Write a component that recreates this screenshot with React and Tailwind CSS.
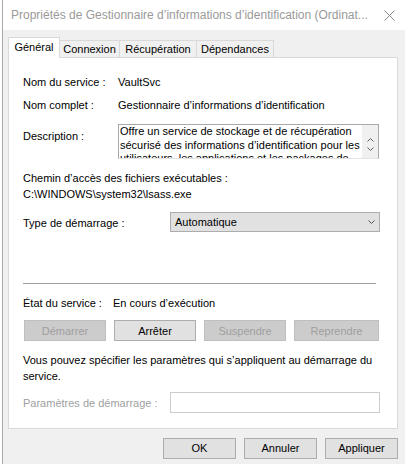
import React from 'react'

function Chevron({ dir = 'down', className = '' }) {
  const d = dir === 'down' ? 'M0.5 0.5 L3.5 3.5 L6.5 0.5' : 'M0.5 3.5 L3.5 0.5 L6.5 3.5'
  return (
    <svg width="7" height="4" viewBox="0 0 7 4" className={className}>
      <path d={d} fill="none" stroke="currentColor" strokeWidth="1" />
    </svg>
  )
}

function Btn({ children, disabled, className = '' }) {
  return (
    <div
      className={`h-[21px] flex items-center justify-center border ${
        disabled ? 'bg-[#cccccc] border-[#bfbfbf] text-[#a0a0a0]' : 'bg-[#e1e1e1] border-[#adadad] text-black'
      } ${className}`}
    >
      {children}
    </div>
  )
}

export default function App() {
  const tabs = [
    { label: 'Connexion', w: 'w-[60px]' },
    { label: 'Récupération', w: 'w-[77px]' },
    { label: 'Dépendances', w: 'w-[77px]' },
  ]

  return (
    <div className="w-[405px] h-[464px] bg-white overflow-hidden font-['Liberation_Sans',Arial,sans-serif] text-[11px] text-black">
      <div className="ml-[2px] h-full border-l border-[#a8a8a8] flex flex-col">
        {/* Title bar */}
        <div className="h-[30px] shrink-0 bg-white flex items-center justify-between pl-[8px] pr-[10px]">
          <div className="text-[12px] text-[#9a9a9a] whitespace-nowrap">
            Propriétés de Gestionnaire d’informations d’identification (Ordinat...
          </div>
          <svg width="11" height="11" viewBox="0 0 11 11" className="text-[#8a8a8a]">
            <path d="M0.5 0.5 L10.5 10.5 M10.5 0.5 L0.5 10.5" stroke="currentColor" strokeWidth="1" />
          </svg>
        </div>

        {/* Body */}
        <div className="flex-1 bg-[#f0f0f0] pl-[5px] pt-[7px]">
          {/* Tabs */}
          <div className="flex items-end h-[20px]">
            <div className="relative z-10 w-[52px] h-[21px] mb-[-1px] bg-white border-l border-t border-r border-[#d9d9d9] flex items-center justify-center pb-[1px]">
              Général
            </div>
            {tabs.map(t => (
              <div
                key={t.label}
                className={`${t.w} h-[17px] border-t border-r border-[#d9d9d9] bg-[#f0f0f0] flex items-center justify-center`}
              >
                {t.label}
              </div>
            ))}
          </div>

          {/* Panel */}
          <div className="w-[390px] h-[372px] border border-[#d9d9d9] bg-white pl-[14px] pt-[17px] flex flex-col leading-[14px]">
            <div className="flex">
              <div className="w-[95px]">Nom du service :</div>
              <div>VaultSvc</div>
            </div>
            <div className="flex mt-[9px]">
              <div className="w-[95px]">Nom complet :</div>
              <div>Gestionnaire d’informations d’identification</div>
            </div>
            <div className="flex items-start mt-[12px]">
              <div className="w-[95px] pt-[5px]">Description :</div>
              <div className="w-[261px] h-[35px] border border-[#a9a9a9] border-b-[#e3e3e3] flex overflow-hidden">
                <div className="flex-1 pl-[1px] leading-[13.5px] whitespace-nowrap">
                  Offre un service de stockage et de récupération
                  <br />
                  sécurisé des informations d’identification pour les
                  <br />
                  utilisateurs, les applications et les packages de
                </div>
                <div className="w-[16px] bg-[#f0f0f0] flex flex-col items-center text-[#606060] pt-[13px] gap-[5px]">
                  <Chevron dir="up" />
                  <Chevron dir="down" />
                </div>
              </div>
            </div>
            <div className="mt-[12px]">Chemin d’accès des fichiers exécutables :</div>
            <div className="mt-[2px]">C:\WINDOWS\system32\lsass.exe</div>
            <div className="flex items-center mt-[11px]">
              <div className="w-[147px] pt-[1px]">Type de démarrage :</div>
              <div className="w-[210px] h-[20px] bg-[#e1e1e1] border border-[#adadad] flex items-center justify-between pl-[4px] pr-[4px]">
                <span>Automatique</span>
                <Chevron dir="down" className="text-[#555555]" />
              </div>
            </div>

            <div className="mt-[51px] h-px w-[353px] bg-[#a0a0a0]" />

            <div className="flex mt-[12px]">
              <div className="w-[90px]">État du service :</div>
              <div>En cours d’exécution</div>
            </div>
            <div className="flex gap-[8px] mt-[10px] ml-[1px]">
              <Btn disabled className="w-[82px]">Démarrer</Btn>
              <Btn className="w-[82px]">Arrêter</Btn>
              <Btn disabled className="w-[82px]">Suspendre</Btn>
              <Btn disabled className="w-[85px]">Reprendre</Btn>
            </div>
            <div className="mt-[11px] leading-[16px]">
              Vous pouvez spécifier les paramètres qui s’appliquent au démarrage du
              <br />
              service.
            </div>
            <div className="flex items-center mt-[8px]">
              <div className="w-[147px] text-[#a0a0a0] pt-[1px]">Paramètres de démarrage :</div>
              <div className="w-[210px] h-[21px] bg-white border border-[#cccccc]" />
            </div>
          </div>

          {/* Dialog buttons */}
          <div className="w-[390px] flex justify-end gap-[8px] mt-[9px]">
            <Btn className="w-[73px]">OK</Btn>
            <Btn className="w-[73px]">Annuler</Btn>
            <Btn className="w-[73px]">Appliquer</Btn>
          </div>
        </div>
      </div>
    </div>
  )
}
